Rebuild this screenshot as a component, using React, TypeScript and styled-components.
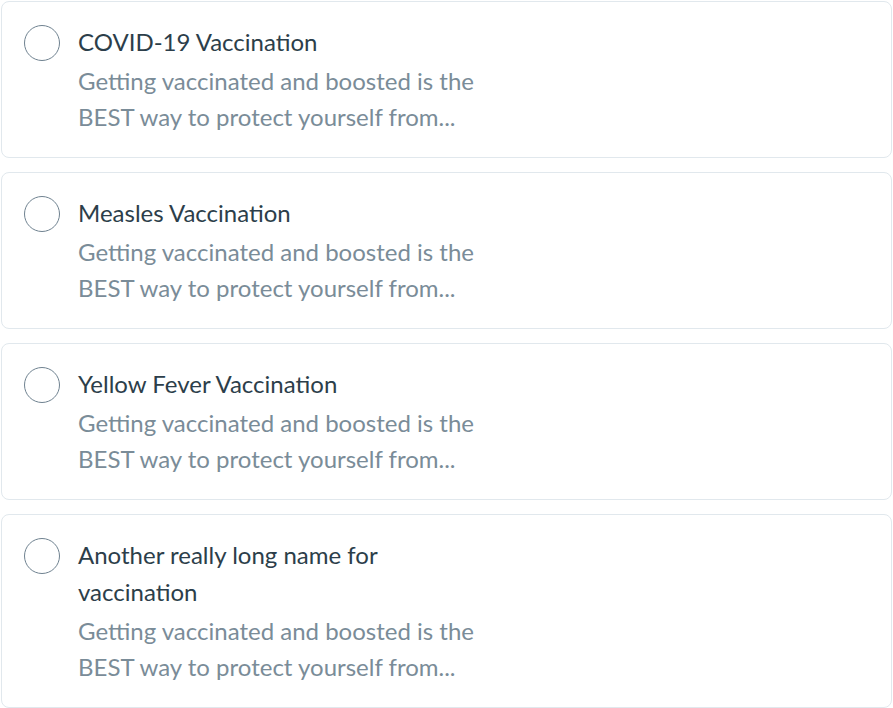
import React from "react";
import styled, { createGlobalStyle } from "styled-components";

const Global = createGlobalStyle`
  html, body { margin: 0; padding: 0; background: #ffffff; }
  body { font-family: Lato, "Open Sans", sans-serif; }
`;

const List = styled.div`
  display: flex;
  flex-direction: column;
  gap: 14px;
  padding: 1px 1px 0 1px;
  width: 893px;
  box-sizing: border-box;
`;

const Card = styled.label`
  display: flex;
  align-items: flex-start;
  gap: 18px;
  padding: 21px 24px 22px 22px;
  border: 1px solid #e1e8ed;
  border-radius: 8px;
  background: #ffffff;
  cursor: pointer;
`;

const Radio = styled.span`
  flex: none;
  width: 36px;
  height: 36px;
  border: 1.5px solid #6f8290;
  border-radius: 50%;
  box-sizing: border-box;
  margin-top: 2px;
`;

const Body = styled.div`
  display: flex;
  flex-direction: column;
  max-width: 400px;
`;

const Title = styled.div`
  font-size: 24px;
  line-height: 37px;
  color: #2c3e4a;
  margin-bottom: 3px;
`;

const Desc = styled.div`
  font-size: 24px;
  line-height: 36px;
  color: #7a8c98;
`;

const items = [
  "COVID-19 Vaccination",
  "Measles Vaccination",
  "Yellow Fever Vaccination",
  "Another really long name for vaccination",
];

export default function App() {
  return (
    <>
      <Global />
      <List>
        {items.map((t) => (
          <Card key={t}>
            <Radio />
            <Body>
              <Title>{t}</Title>
              <Desc>
                Getting vaccinated and boosted is the
                <br />
                BEST way to protect yourself from...
              </Desc>
            </Body>
          </Card>
        ))}
      </List>
    </>
  );
}
